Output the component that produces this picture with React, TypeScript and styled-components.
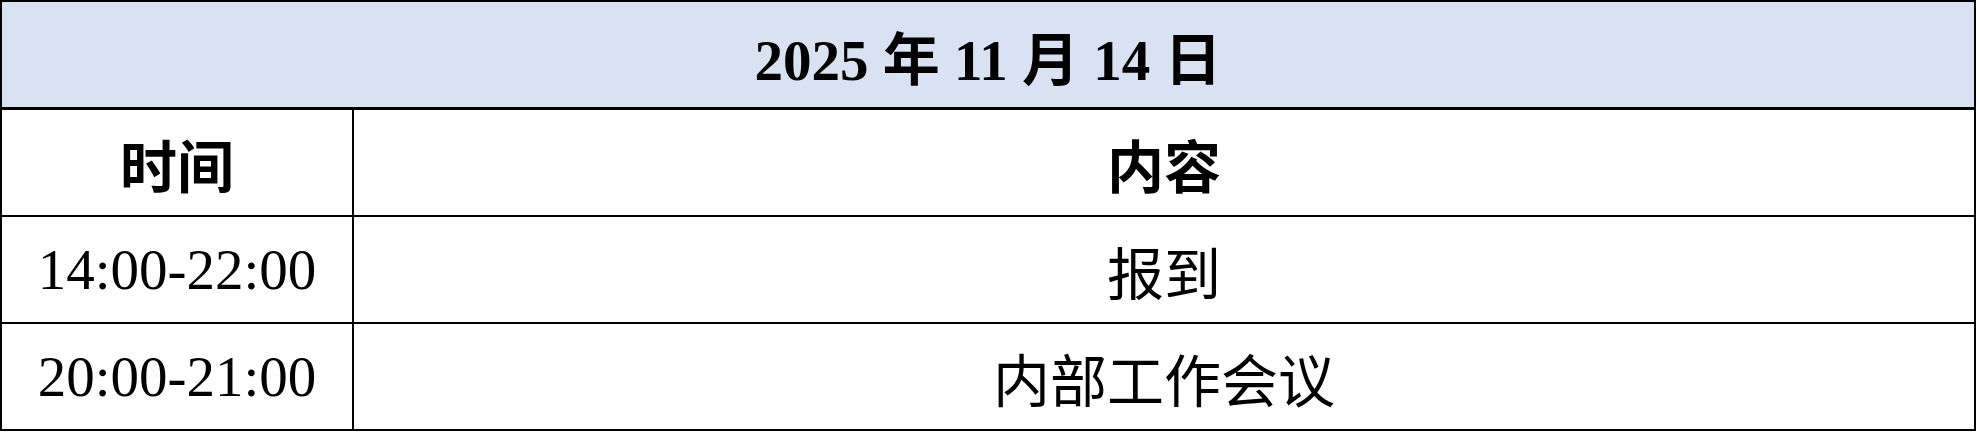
import styled, { createGlobalStyle } from "styled-components";

const GlobalStyle = createGlobalStyle`
  html, body {
    margin: 0;
    padding: 0;
    background: #ffffff;
  }
`;

const Sheet = styled.table`
  width: 1976px;
  border-collapse: collapse;
  table-layout: fixed;
  border: 2px solid #000;
  font-family: "Liberation Serif", "Noto Sans CJK SC", serif;
  color: #000;
`;

const TitleCell = styled.th`
  height: 105px;
  padding: 0;
  background: #d9e2f3;
  border: 2px solid #000;
  border-bottom: 3px solid #000;
  font-size: 57px;
  font-weight: 700;
  text-align: center;
  vertical-align: middle;
`;

const Cell = styled.td<{ $bold?: boolean }>`
  height: 105px;
  padding: 0;
  border: 2px solid #000;
  font-size: 57px;
  font-weight: ${(p) => (p.$bold ? 700 : 400)};
  text-align: center;
  vertical-align: middle;
  white-space: nowrap;
`;

const schedule = [
  { time: "14:00-22:00", item: "报到" },
  { time: "20:00-21:00", item: "内部工作会议" },
];

const App = () => {
  return (
    <>
      <GlobalStyle />
      <Sheet>
        <colgroup>
          <col style={{ width: 352 }} />
          <col />
        </colgroup>
        <thead>
          <tr>
            <TitleCell colSpan={2}>2025 年 11 月 14 日</TitleCell>
          </tr>
        </thead>
        <tbody>
          <tr>
            <Cell $bold>时间</Cell>
            <Cell $bold>内容</Cell>
          </tr>
          {schedule.map((row) => (
            <tr key={row.time}>
              <Cell>{row.time}</Cell>
              <Cell>{row.item}</Cell>
            </tr>
          ))}
        </tbody>
      </Sheet>
    </>
  );
};

export default App;
